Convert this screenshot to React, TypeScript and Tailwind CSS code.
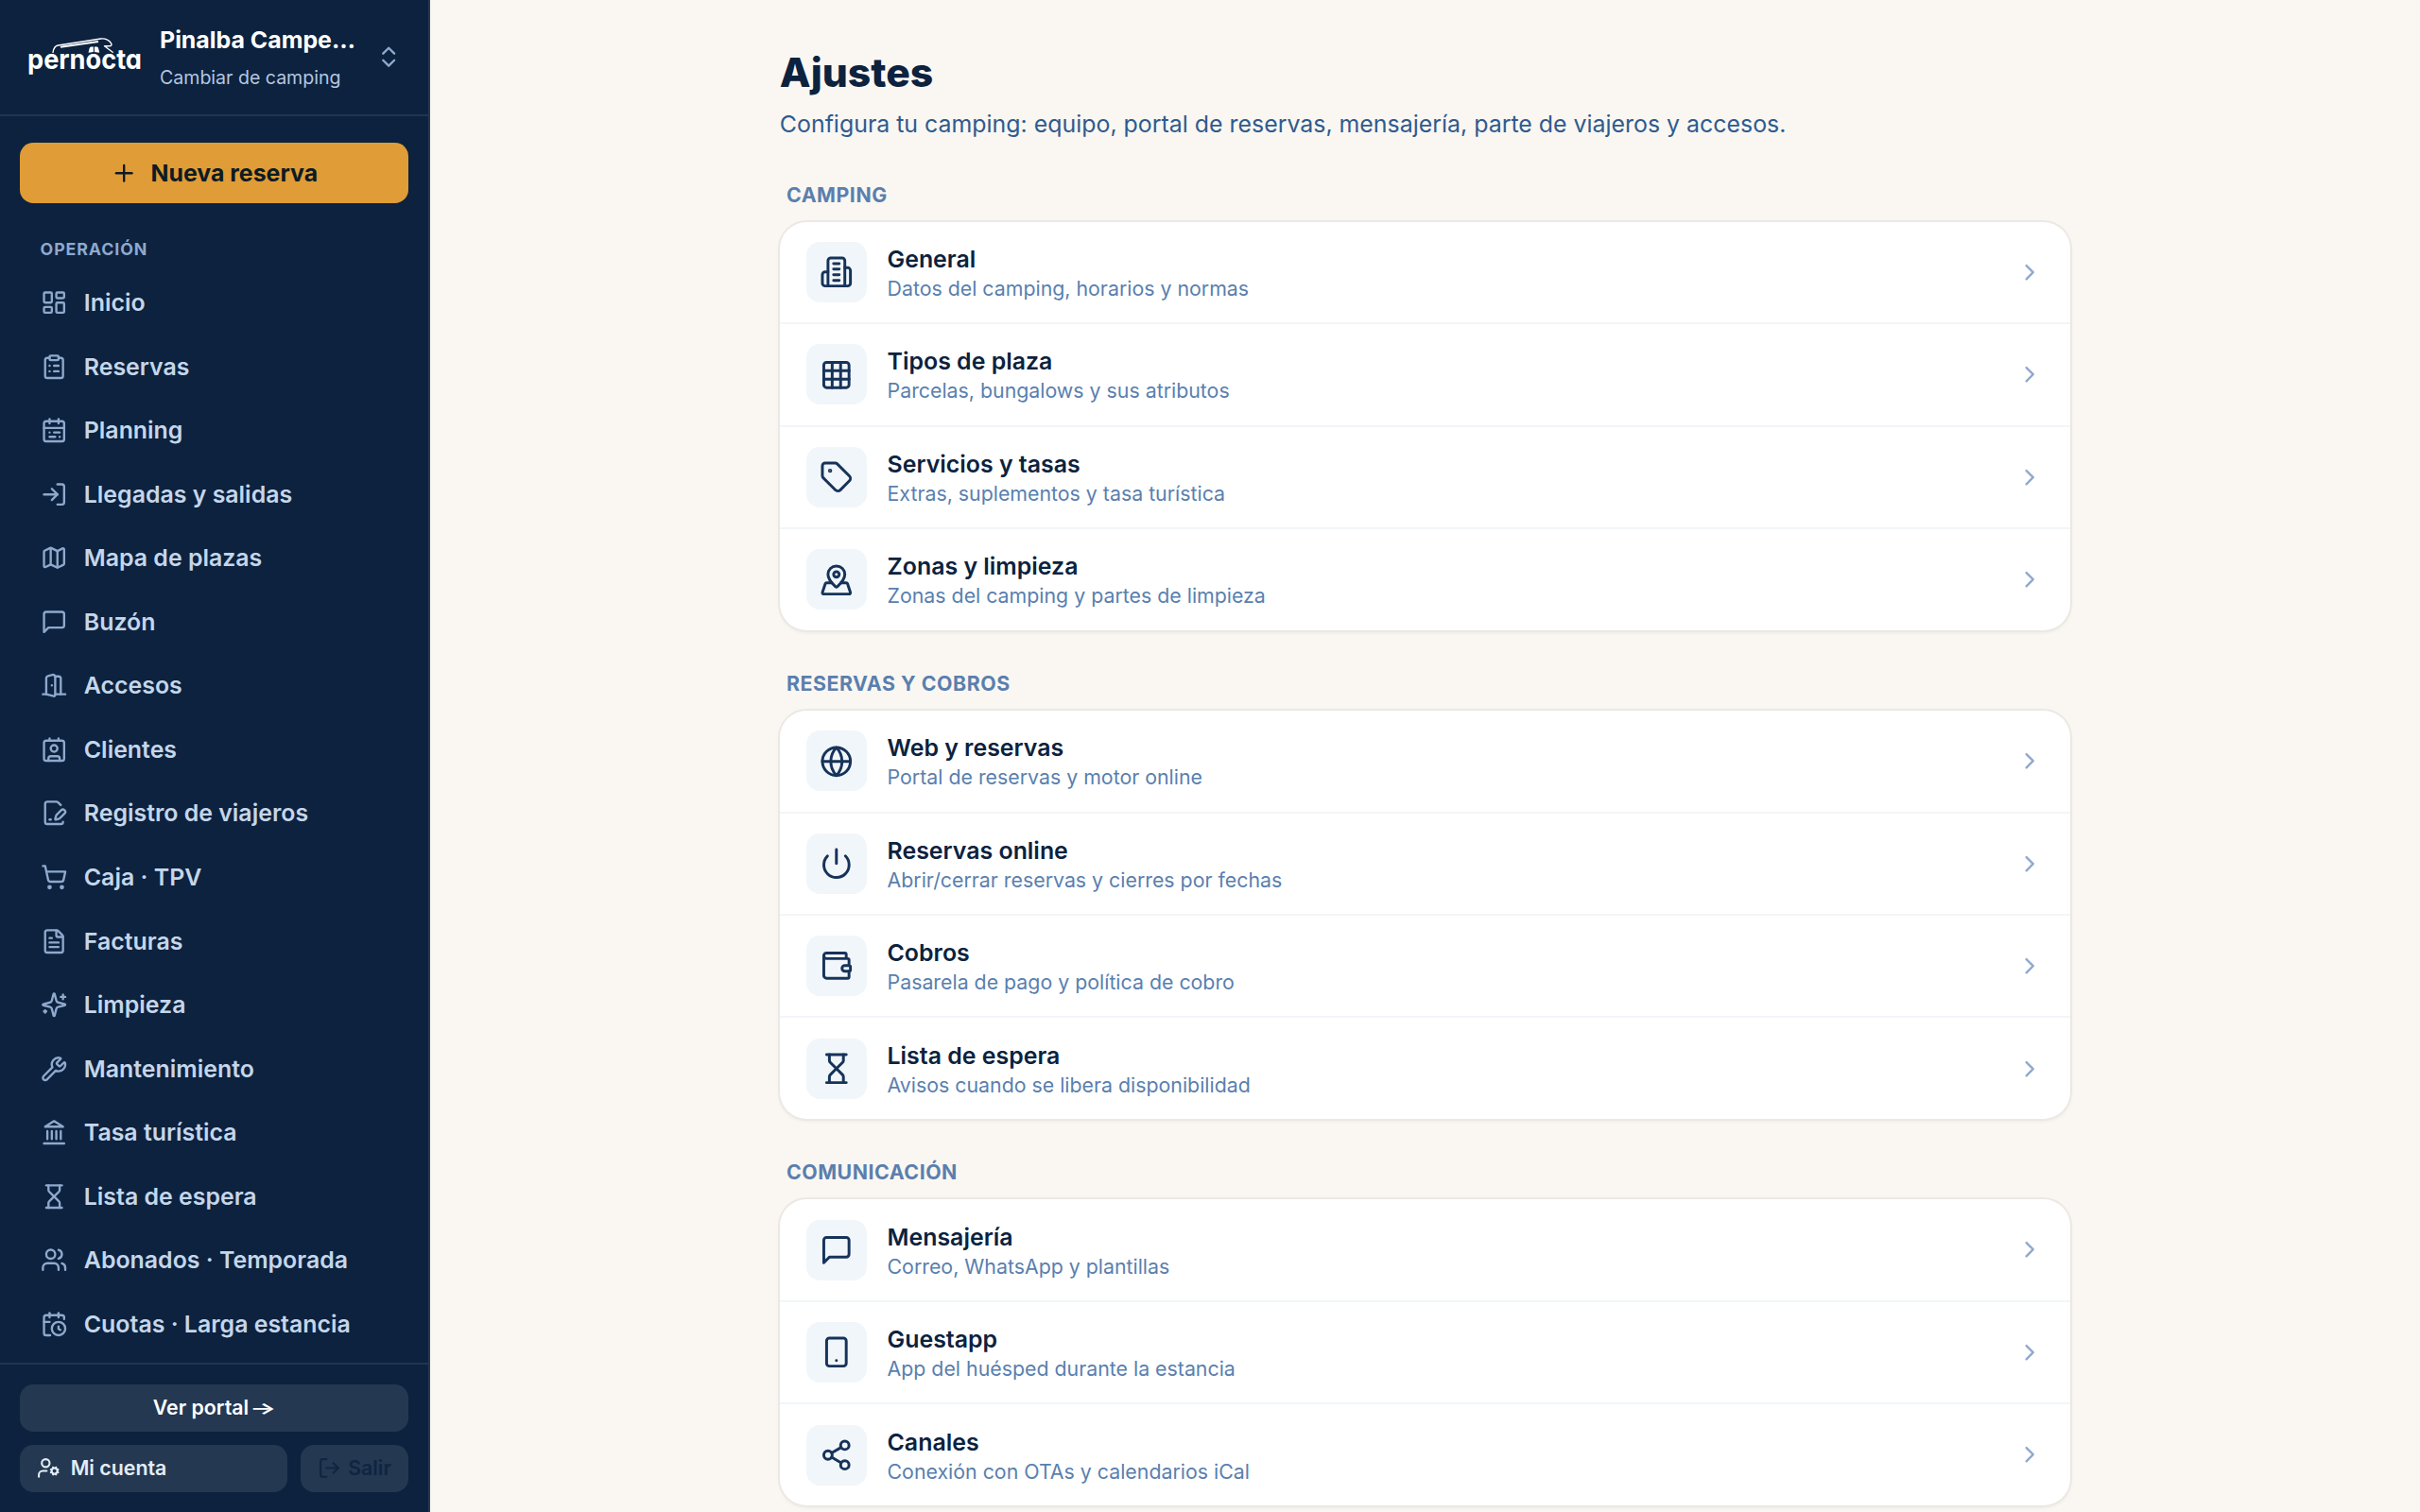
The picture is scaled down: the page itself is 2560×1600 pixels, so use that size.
import type { ReactNode } from 'react'
import {
  CalendarClock,
  ChevronRight,
  ChevronsUpDown,
  ClipboardList,
  FileText,
  Globe,
  Grid3x3,
  Hourglass,
  LayoutDashboard,
  LogIn,
  LogOut,
  Map,
  MapPinned,
  Plus,
  Power,
  Share2,
  ShoppingCart,
  Smartphone,
  Tag,
  Users,
  Wrench,
} from 'lucide-react'

type IconProps = { className?: string }

function Stroke({ className, children }: IconProps & { children: ReactNode }) {
  return (
    <svg
      viewBox="0 0 24 24"
      fill="none"
      stroke="currentColor"
      strokeWidth="2"
      strokeLinecap="round"
      strokeLinejoin="round"
      className={className}
    >
      {children}
    </svg>
  )
}

const MessageIcon = ({ className }: IconProps) => (
  <Stroke className={className}>
    <path d="M21 15a2 2 0 0 1-2 2H7l-4 4V5a2 2 0 0 1 2-2h14a2 2 0 0 1 2 2z" />
  </Stroke>
)

const PlanningIcon = ({ className }: IconProps) => (
  <Stroke className={className}>
    <rect x="3" y="4" width="18" height="18" rx="2" />
    <path d="M16 2v4M8 2v4M3 10h18M8 14h.01M12 14h5M8 18h5M17 18h.01" />
  </Stroke>
)

const DoorIcon = ({ className }: IconProps) => (
  <Stroke className={className}>
    <path d="M2 20h3M13 20h9M10 12v.01" />
    <path d="M13 4.562v16.157a1 1 0 0 1-1.242.97L5 20V5.562a2 2 0 0 1 1.515-1.94l4-1A2 2 0 0 1 13 4.561Z" />
    <path d="M13 4h3a2 2 0 0 1 2 2v14" />
  </Stroke>
)

const ClientsIcon = ({ className }: IconProps) => (
  <Stroke className={className}>
    <path d="M16 2v2M8 2v2M7 22v-2a2 2 0 0 1 2-2h6a2 2 0 0 1 2 2v2" />
    <circle cx="12" cy="11" r="3" />
    <rect x="3" y="4" width="18" height="18" rx="2" />
  </Stroke>
)

const RegistryIcon = ({ className }: IconProps) => (
  <Stroke className={className}>
    <path d="m18 5-2.414-2.414A2 2 0 0 0 14.172 2H6a2 2 0 0 0-2 2v16a2 2 0 0 0 2 2h12a2 2 0 0 0 2-2" />
    <path d="M21.378 12.626a1 1 0 0 0-3.004-3.004l-4.01 4.012a2 2 0 0 0-.506.854l-.837 2.87a.5.5 0 0 0 .62.62l2.87-.837a2 2 0 0 0 .854-.506z" />
    <path d="M8 18h1" />
  </Stroke>
)

const SparklesIcon = ({ className }: IconProps) => (
  <Stroke className={className}>
    <path d="M9.937 15.500A2 2 0 0 0 8.500 14.063l-6.135-1.582a.5.5 0 0 1 0-.962L8.500 9.936A2 2 0 0 0 9.937 8.500l1.582-6.135a.5.5 0 0 1 .963 0L14.063 8.500A2 2 0 0 0 15.500 9.937l6.135 1.581a.5.5 0 0 1 0 .964L15.500 14.063a2 2 0 0 0-1.437 1.437l-1.582 6.135a.5.5 0 0 1-.963 0z" />
    <path d="M20 3v4M22 5h-4M4 17v2M5 18H3" />
  </Stroke>
)

const LandmarkIcon = ({ className }: IconProps) => (
  <Stroke className={className}>
    <path d="M3 22h18M6 18v-7M10 18v-7M14 18v-7M18 18v-7" />
    <path d="m12 2 8 5H4z" />
  </Stroke>
)

const BuildingIcon = ({ className }: IconProps) => (
  <Stroke className={className}>
    <path d="M6 22V4a2 2 0 0 1 2-2h8a2 2 0 0 1 2 2v18Z" />
    <path d="M6 12H4a2 2 0 0 0-2 2v6a2 2 0 0 0 2 2h2M18 9h2a2 2 0 0 1 2 2v9a2 2 0 0 1-2 2h-2" />
    <path d="M10 6h4M10 10h4M10 14h4M10 18h4" />
  </Stroke>
)

const WalletIcon = ({ className }: IconProps) => (
  <Stroke className={className}>
    <path d="M19 7V4a1 1 0 0 0-1-1H5a2 2 0 0 0 0 4h15a1 1 0 0 1 1 1v4h-3a2 2 0 0 0 0 4h3a1 1 0 0 0 1-1v-2a1 1 0 0 0-1-1" />
    <path d="M3 5v14a2 2 0 0 0 2 2h15a1 1 0 0 0 1-1v-4" />
  </Stroke>
)

const UserCogIcon = ({ className }: IconProps) => (
  <Stroke className={className}>
    <path d="M10 15H6a4 4 0 0 0-4 4v2" />
    <path d="m14.305 16.530.923-.382M15.228 13.852l-.923-.383M16.852 12.228l-.383-.923M16.852 17.772l-.383.924M19.148 12.228l.383-.923M19.530 18.696l-.382-.924M20.772 13.852l.924-.383M20.772 16.148l.924.383" />
    <circle cx="18" cy="15" r="3" />
    <circle cx="9" cy="7" r="4" />
  </Stroke>
)

const navItems = [
  { label: 'Inicio', icon: LayoutDashboard },
  { label: 'Reservas', icon: ClipboardList },
  { label: 'Planning', icon: PlanningIcon },
  { label: 'Llegadas y salidas', icon: LogIn },
  { label: 'Mapa de plazas', icon: Map },
  { label: 'Buzón', icon: MessageIcon },
  { label: 'Accesos', icon: DoorIcon },
  { label: 'Clientes', icon: ClientsIcon },
  { label: 'Registro de viajeros', icon: RegistryIcon },
  { label: 'Caja · TPV', icon: ShoppingCart },
  { label: 'Facturas', icon: FileText },
  { label: 'Limpieza', icon: SparklesIcon },
  { label: 'Mantenimiento', icon: Wrench },
  { label: 'Tasa turística', icon: LandmarkIcon },
  { label: 'Lista de espera', icon: Hourglass },
  { label: 'Abonados · Temporada', icon: Users },
  { label: 'Cuotas · Larga estancia', icon: CalendarClock },
]

const sections = [
  {
    title: 'Camping',
    items: [
      { title: 'General', text: 'Datos del camping, horarios y normas', icon: BuildingIcon },
      { title: 'Tipos de plaza', text: 'Parcelas, bungalows y sus atributos', icon: Grid3x3 },
      { title: 'Servicios y tasas', text: 'Extras, suplementos y tasa turística', icon: Tag },
      { title: 'Zonas y limpieza', text: 'Zonas del camping y partes de limpieza', icon: MapPinned },
    ],
  },
  {
    title: 'Reservas y cobros',
    items: [
      { title: 'Web y reservas', text: 'Portal de reservas y motor online', icon: Globe },
      { title: 'Reservas online', text: 'Abrir/cerrar reservas y cierres por fechas', icon: Power },
      { title: 'Cobros', text: 'Pasarela de pago y política de cobro', icon: WalletIcon },
      { title: 'Lista de espera', text: 'Avisos cuando se libera disponibilidad', icon: Hourglass },
    ],
  },
  {
    title: 'Comunicación',
    items: [
      { title: 'Mensajería', text: 'Correo, WhatsApp y plantillas', icon: MessageIcon },
      { title: 'Guestapp', text: 'App del huésped durante la estancia', icon: Smartphone },
      { title: 'Canales', text: 'Conexión con OTAs y calendarios iCal', icon: Share2 },
    ],
  },
]

function Logo() {
  return (
    <svg viewBox="0 0 120 40" className="h-10 w-[120px] shrink-0 overflow-visible text-white" fill="none">
      {/* Camper roof, awning and windows */}
      <path
        d="M26 15.300c.7-4 1.800-6.800 5.500-7.300L76.500 1c5-.6 10 1.800 11.300 5.300.6 1.700-.4 2.500-2.300 2.500H80.500l8.700 6.500"
        stroke="currentColor"
        strokeWidth="1.400"
        strokeLinecap="round"
        strokeLinejoin="round"
      />
      <path d="M34 9.800 74 4" stroke="currentColor" strokeWidth="2" />
      <path d="M63.500 15.800l1-4.300c.4-1.500 1.300-2 2.500-2h1.800v5.600zM69.900 9.500h2c1.300 0 2 .6 2.300 2l1 4.300-5.300-.7z" fill="currentColor" />
      <text
        x="-1"
        y="33"
        textLength="121"
        lengthAdjust="spacingAndGlyphs"
        fill="currentColor"
        className="font-['Inter',sans-serif] text-[29px] font-bold [font-feature-settings:'cv11']"
      >
        pernocta
      </text>
    </svg>
  )
}

function Sidebar() {
  return (
    <aside className="flex h-full w-[455px] shrink-0 flex-col border-r-2 border-[#243a55] bg-[#0c223e]">
      <div className="flex h-[122.7px] shrink-0 items-center border-b-2 border-[#20354f] pr-[28px] pl-[30px]">
        <Logo />
        <div className="ml-[19px] flex w-[213px] flex-col gap-[4px] pt-[5px]">
          <p className="text-[24.9px] leading-[35.5px] font-bold whitespace-nowrap text-white">Pinalba Campe…</p>
          <p className="text-[19.56px] leading-[35.5px] text-[#b3c6e0]">Cambiar de camping</p>
        </div>
        <ChevronsUpDown className="ml-auto size-[28.4px] text-[#8fa9cd]" />
      </div>

      <div className="flex flex-1 flex-col px-[21.3px] pt-[28.4px]">
        <button className="flex h-16 w-full shrink-0 items-center justify-center gap-[14.2px] rounded-[14.2px] bg-[#e09c36] text-[24.9px] font-bold text-[#0d1b24]">
          <Plus className="size-[28.4px]" />
          <span className="pt-px">Nueva reserva</span>
        </button>
        <p className="mt-[35px] pl-[21.3px] text-[17.8px] leading-[28.4px] font-bold tracking-[0.890px] text-[#8fa9cd] uppercase">
          Operación
        </p>
        <nav className="mt-[9.800px] flex flex-col gap-[3.56px]">
          {navItems.map(({ label, icon: Icon }) => (
            <a key={label} className="flex h-16 items-center gap-[17.8px] px-[21.3px] text-[24.9px] font-semibold text-[#c5d6ea]">
              <Icon className="size-[28.4px] text-[#8fa9cd]" />
              <span className="pt-px">{label}</span>
            </a>
          ))}
        </nav>
      </div>

      {/* Footer actions */}
      <div className="flex shrink-0 flex-col gap-[14.2px] border-t-2 border-[#20354f] p-[21.3px] text-[21.33px] font-semibold">
        <button className="flex h-[49.8px] items-center justify-center gap-px rounded-[14.2px] bg-[#243852] text-white">
          Ver portal
          <span className="inline-block w-[27px] origin-left scale-x-175 pt-px text-left text-[17px]">→</span>
        </button>
        <div className="flex gap-[14.2px]">
          <button className="flex h-[49.8px] flex-1 items-center gap-[10.7px] rounded-[14.2px] bg-[#243852] px-[17.8px] text-[#e3edf7]">
            <UserCogIcon className="size-[24.9px]" />
            Mi cuenta
          </button>
          <button className="flex h-[49.8px] items-center gap-[7.1px] rounded-[14.2px] bg-[#243852] px-[17.8px] text-[#0f2541]">
            <LogOut className="size-[24.9px]" />
            Salir
          </button>
        </div>
      </div>
    </aside>
  )
}

export default function App() {
  return (
    <div className="flex h-[1600px] w-[2560px] overflow-hidden bg-[#faf7f2] font-['Inter',sans-serif]">
      <Sidebar />
      <main className="flex flex-1 justify-center overflow-hidden pt-[48px]">
        <div className="w-[1365.3px]">
          <h1 className="text-[42.67px] leading-[57px] font-extrabold text-[#0c223e]">Ajustes</h1>
          <p className="mt-[9px] text-[24.9px] leading-[35.5px] text-[#2f5b8f]">
            Configura tu camping: equipo, portal de reservas, mensajería, parte de viajeros y accesos.
          </p>
          {sections.map((section) => (
            <section key={section.title} className="mt-[42px]">
              <h2 className="pl-[7.1px] text-[21.33px] leading-[28.44px] font-bold tracking-[0.530px] text-[#5a7fae] uppercase">
                {section.title}
              </h2>
              <div className="mt-[14.89px] divide-y-2 divide-[#f2f6f9] overflow-hidden rounded-[28.4px] bg-white shadow-[0_2px_4px_rgba(12,34,62,0.08)] ring-2 ring-[#ece9e4]">
                {section.items.map(({ title, text, icon: Icon }) => (
                  <a key={title} className="flex h-[108.44px] items-center px-[28.4px] last:h-[106.67px]">
                    <span className="flex size-16 items-center justify-center rounded-[14.2px] bg-[#f1f6fa]">
                      <Icon className="size-[35.6px] text-[#16335a]" />
                    </span>
                    <span className="ml-[21.3px] flex flex-1 flex-col pt-[0.500px]">
                      <span className="text-[24.9px] leading-[35px] font-semibold text-[#0c223e]">{title}</span>
                      <span className="text-[21.33px] leading-[27.600px] text-[#5a7fae]">{text}</span>
                    </span>
                    <ChevronRight className="size-[28.4px] text-[#8fa9cd]" />
                  </a>
                ))}
              </div>
            </section>
          ))}
        </div>
      </main>
    </div>
  )
}
